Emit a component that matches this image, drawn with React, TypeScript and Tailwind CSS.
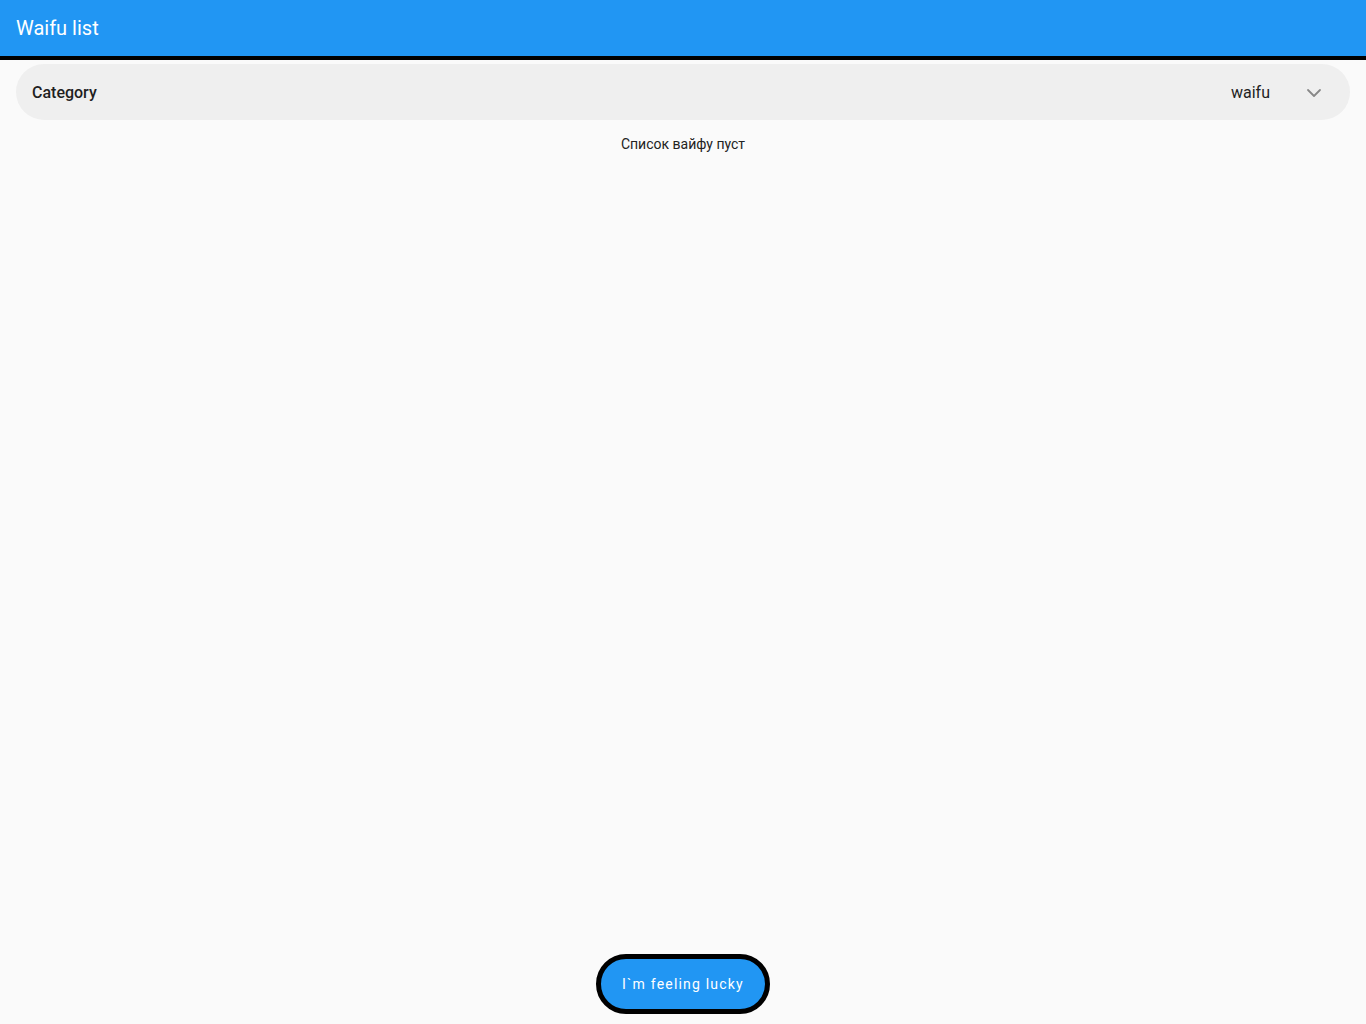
import { ChevronDown } from "lucide-react";

export default function App() {
  return (
    <div className="min-h-screen flex flex-col bg-[#fafafa] font-['Roboto',sans-serif]">
      {/* App bar */}
      <header className="h-[60px] bg-[#2196f3] border-b-4 border-black flex items-center px-4">
        <h1 className="text-[20px] font-normal text-white leading-none -mt-[1px]">Waifu list</h1>
      </header>

      <main className="flex-1 flex flex-col px-4 pt-1">
        <div className="h-14 rounded-[28px] bg-[#efefef] flex items-center pl-4 pr-6 pt-[2px]">
          <span className="text-base font-medium text-[#1f1f1f]">Category</span>
          <span className="ml-auto text-base text-[#222]">waifu</span>
          <ChevronDown className="w-6 h-6 ml-8 text-[#888]" strokeWidth={1.8} />
        </div>
        <p className="mt-[14px] text-center text-sm text-[#222]">Список вайфу пуст</p>
      </main>

      <div className="flex justify-center pb-[10px]">
        <button className="h-[60px] w-[174px] rounded-full border-[5px] border-black bg-[#2196f3] text-white text-sm font-normal tracking-[1.2px]">
          I`m feeling lucky
        </button>
      </div>
    </div>
  );
}
